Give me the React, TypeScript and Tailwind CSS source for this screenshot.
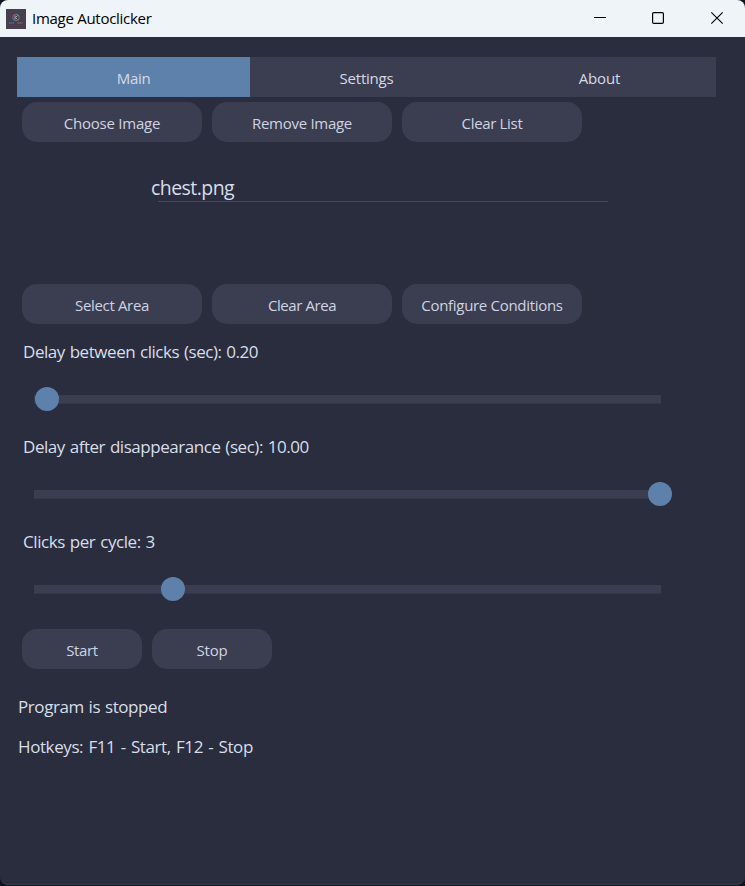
type TextProps = { label: string; tracking: string };

function Tab({ label, tracking, active }: TextProps & { active?: boolean }) {
  return (
    <button
      className={`h-10 flex-1 pt-0.5 text-[15px] leading-[38px] text-[#d5d9e6] ${tracking} ${
        active ? "bg-[#5e81ac]" : ""
      }`}
    >
      {label}
    </button>
  );
}

function PillButton({ label, tracking, width = "w-[180px]" }: TextProps & { width?: string }) {
  return (
    <button
      className={`h-10 rounded-[15px] bg-[#3b3e51] pt-0.5 text-[15px] leading-[38px] text-[#d0d3e2] ${tracking} ${width}`}
    >
      {label}
    </button>
  );
}

function SliderRow({ label, tracking, offset }: TextProps & { offset: number }) {
  return (
    <div className="h-[95px]">
      <p className={`h-[34px] pl-[23px] text-[17px] leading-[34px] text-[#d8dee9] ${tracking}`}>{label}</p>
      <div className="ml-[34px] mt-[17px] flex h-[25px] w-[638px] items-center">
        <div className="relative h-2 w-[626.5px] bg-[#3b3e51] shadow-[0_1px_0_#343748]">
          <span
            className="absolute -top-2 size-[24.5px] rounded-full bg-[#5e81ac]"
            style={{ left: offset }}
          />
        </div>
      </div>
    </div>
  );
}

function AppIcon() {
  return (
    <svg width="20" height="20" viewBox="0 0 20 20" className="ml-1.5">
      <rect width="20" height="20" fill="#463f50" />
      <g fill="none" strokeWidth="1">
        <path d="M6.7 8.5a3.3 3.3 0 0 1 3.3-3.3" stroke="#a95868" />
        <path d="M10 5.2a3.3 3.3 0 0 1 3.3 3.3" stroke="#4b9b80" />
        <path d="M13.3 8.5a3.3 3.3 0 0 1-3.3 3.3" stroke="#8a6b58" />
        <path d="M10 11.8a3.3 3.3 0 0 1-3.3-3.3" stroke="#3f84a8" />
        <path d="M9 6.5v4M11.5 6.5 9.5 8.5l2 2" stroke="#aaa5b5" />
        <path d="M3 14h5M11.5 14h5" stroke="#81798a" strokeDasharray="1.5 .5" />
      </g>
    </svg>
  );
}

function TitleBar() {
  return (
    <header className="flex h-[37px] items-center bg-[#eff4f9] text-black">
      <AppIcon />
      <h1 className="mb-0.5 ml-1.5 flex-1 text-[15px] leading-[34px] tracking-[-0.28px]">Image Autoclicker</h1>
      <svg width="151" height="37" viewBox="0 0 151 37" fill="none" stroke="#000">
        <path d="M0 17.5h12" />
        <rect x="58.6" y="12.6" width="10.8" height="10.8" rx="1.2" strokeWidth="1.2" />
        <path d="m117.3 12.3 11.4 11.4m0-11.4-11.4 11.4" strokeWidth="1.1" />
      </svg>
    </header>
  );
}

export default function App() {
  return (
    <div className="h-[886px] w-[745px] bg-[#11121b]">
      <div className="h-[885px] overflow-hidden rounded-[8px] border-b border-[#343e4a] bg-[#2a2d3e] font-['Open_Sans','Noto_Sans',sans-serif]">
        <TitleBar />
        <nav className="ml-[17px] mt-5 flex w-[699px] bg-[#3b3e51]">
          <Tab label="Main" tracking="tracking-[-0.3px]" active />
          <Tab label="Settings" tracking="tracking-[-0.2px]" />
          <Tab label="About" tracking="tracking-[-0.1px]" />
        </nav>
        <div className="ml-[22px] mt-[5px] flex gap-2.5">
          <PillButton label="Choose Image" tracking="tracking-[-0.22px]" />
          <PillButton label="Remove Image" tracking="tracking-[-0.28px]" />
          <PillButton label="Clear List" tracking="tracking-[-0.33px]" />
        </div>
        <div className="ml-[151px] mt-[33px] h-[109px]">
          <p className="h-[26px] text-[19.5px] leading-[26px] tracking-[-0.55px] text-[#d8dee9]">chest.png</p>
          <div className="ml-[7px] h-px w-[450px] bg-[#464959]" />
        </div>
        <div className="ml-[22px] flex gap-2.5">
          <PillButton label="Select Area" tracking="tracking-[-0.33px]" />
          <PillButton label="Clear Area" tracking="tracking-[-0.42px]" />
          <PillButton label="Configure Conditions" tracking="tracking-[-0.3px]" />
        </div>
        <div className="mt-[11px]">
          <SliderRow label="Delay between clicks (sec): 0.20" tracking="tracking-[-0.45px] [word-spacing:0.8px]" offset={0.5} />
          <SliderRow label="Delay after disappearance (sec): 10.00" tracking="tracking-[-0.45px] [word-spacing:0.8px]" offset={613.5} />
          <SliderRow label="Clicks per cycle: 3" tracking="tracking-[-0.42px] [word-spacing:0.8px]" offset={126.5} />
        </div>
        <div className="ml-[22px] mt-[9px] flex gap-2.5">
          <PillButton label="Start" tracking="tracking-[-0.38px]" width="w-[120px]" />
          <PillButton label="Stop" tracking="tracking-[-0.2px]" width="w-[120px]" />
        </div>
        <div className="mt-[18px] pl-[18px] text-[17px] leading-10 text-[#d8dee9]">
          <p className="tracking-[-0.42px] [word-spacing:0.8px]">Program is stopped</p>
          <p className="tracking-[-0.4px] [word-spacing:1.2px]">Hotkeys: F11 - Start, F12 - Stop</p>
        </div>
      </div>
    </div>
  );
}
